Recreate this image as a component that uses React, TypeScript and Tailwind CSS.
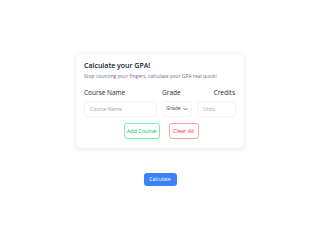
import React from 'react'

function App() {
  return (
    <div className="w-[320px] h-[240px] bg-white flex flex-col items-center pt-[53px] font-['Open_Sans',sans-serif]">
      <div className="w-[170px] bg-white rounded-[5px] border border-gray-100 shadow-[0_1px_4px_rgba(0,0,0,0.08)] px-[8px] pt-[7px] pb-[9px]">
        <h2 className="text-[7px] leading-[9px] font-semibold text-gray-900">Calculate your GPA!</h2>
        <p className="text-[5px] leading-[7px] text-gray-500 mt-[3px]">Stop counting your fingers, calculate your GPA real quick!</p>

        <div className="flex items-center text-[6.5px] leading-[8px] text-gray-800 mt-[9px]">
          <span className="w-[78px]">Course Name</span>
          <span className="w-[36px]">Grade</span>
          <span className="flex-1 text-right pr-[1px]">Credits</span>
        </div>

        <div className="flex items-center gap-[5px] mt-[4px]">
          <input
            placeholder="Course Name"
            className="w-[73px] h-[16px] rounded-[3px] border border-gray-100 px-[5px] text-[5px] placeholder:text-gray-400 outline-none"
          />
          <div className="w-[31px] h-[16px] rounded-[3px] border border-gray-100 flex items-center justify-center gap-[2px] text-[5px] text-gray-700">
            Grade
            <svg width="5" height="4" viewBox="0 0 10 6" fill="none" stroke="currentColor" strokeWidth="1.3">
              <path d="M1 1l4 4 4-4" />
            </svg>
          </div>
          <input
            placeholder="Units"
            className="w-[39px] h-[16px] rounded-[3px] border border-gray-100 px-[5px] text-[5px] placeholder:text-gray-400 outline-none"
          />
        </div>

        <div className="flex items-center justify-center gap-[9px] mt-[6px] pl-[2px]">
          <button className="w-[36px] h-[16px] rounded-[3px] border border-green-300 text-green-500 text-[5.5px]">
            Add Course
          </button>
          <button className="w-[30px] h-[16px] rounded-[3px] border border-red-300 text-red-500 text-[5.5px]">
            Clear All
          </button>
        </div>
      </div>

      <button className="mt-[24px] w-[33px] h-[13px] rounded-[3px] bg-[#3b82f6] text-white text-[5px] font-medium">
        Calculate
      </button>
    </div>
  )
}

export default App
